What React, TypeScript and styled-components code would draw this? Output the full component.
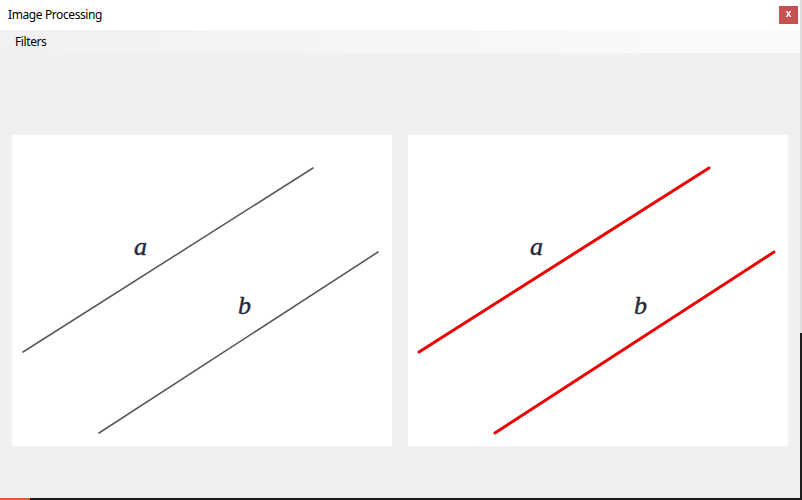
import styled, { createGlobalStyle } from "styled-components";

const GlobalStyle = createGlobalStyle`
  html, body {
    margin: 0;
    padding: 0;
    width: 802px;
    height: 500px;
    overflow: hidden;
  }
  body {
    background: linear-gradient(to bottom, #dedede 0, #dedede 333px, #1e1e1e 333px);
    font-family: "Noto Sans", "Liberation Sans", sans-serif;
  }
`;

type Line = { x1: number; y1: number; x2: number; y2: number };
type Label = { text: string; x: number; y: number };

const lines: Line[] = [
  { x1: 11, y1: 217, x2: 301, y2: 33 },
  { x1: 87, y1: 298, x2: 366, y2: 117 },
];

const labels: Label[] = [
  { text: "a", x: 122, y: 120 },
  { text: "b", x: 226, y: 179 },
];

const Desktop = styled.div`
  width: 802px;
  height: 500px;
  display: flex;
  flex-direction: column;
`;

const Window = styled.div`
  width: 800px;
  height: 498px;
  display: flex;
  flex-direction: column;
  background: #f0f0f0;
`;

const Taskbar = styled.div`
  height: 2px;
  background: linear-gradient(to right, #e2572e 0, #e2572e 30px, #1c1c1c 30px);
`;

const TitleBar = styled.div`
  height: 30px;
  background: #ffffff;
  display: flex;
  align-items: center;
  justify-content: space-between;
  padding: 0 2px 0 8px;
`;

const Title = styled.span`
  font-size: 12px;
  letter-spacing: -0.4px;
  color: #000;
  margin-top: -1px;
`;

const CloseButton = styled.button`
  width: 19px;
  height: 18px;
  border: none;
  padding: 0 0 2px;
  margin-top: -1px;
  background: #c75050;
  color: #fff;
  font-family: "Liberation Sans", sans-serif;
  font-weight: bold;
  font-size: 10px;
  line-height: 1;
`;

const MenuStrip = styled.div`
  height: 23px;
  display: flex;
  align-items: center;
  padding-left: 15px;
  background: linear-gradient(to right, #f1f1f1, #fbfbfb);
`;

const MenuItem = styled.span`
  font-size: 12px;
  letter-spacing: -0.4px;
  color: #000;
  margin-top: -1px;
`;

const Body = styled.div`
  flex: 1;
  display: flex;
  gap: 16px;
  padding: 82px 0 0 12px;
`;

const PictureBox = styled.div`
  width: 380px;
  height: 311px;
  background: #ffffff;
`;

const Glyph = styled.text`
  font-family: "Liberation Serif", "DejaVu Serif", serif;
  font-style: italic;
  font-size: 26px;
  fill: #262838;
  stroke: #262838;
  stroke-width: 0.4px;
`;

function Picture({ stroke, width }: { stroke: string; width: number }) {
  return (
    <PictureBox>
      <svg width="380" height="311" viewBox="0 0 380 311">
        {lines.map((l, i) => (
          <line
            key={i}
            x1={l.x1}
            y1={l.y1}
            x2={l.x2}
            y2={l.y2}
            stroke={stroke}
            strokeWidth={width}
            strokeLinecap="round"
          />
        ))}
        {labels.map((t) => (
          <Glyph key={t.text} x={t.x} y={t.y}>
            {t.text}
          </Glyph>
        ))}
      </svg>
    </PictureBox>
  );
}

export default function App() {
  return (
    <Desktop>
      <GlobalStyle />
      <Window>
        <TitleBar>
          <Title>Image Processing</Title>
          <CloseButton>x</CloseButton>
        </TitleBar>
        <MenuStrip>
          <MenuItem>Filters</MenuItem>
        </MenuStrip>
        <Body>
          <Picture stroke="#5a5a5a" width={1.6} />
          <Picture stroke="#ee0000" width={3} />
        </Body>
      </Window>
      <Taskbar />
    </Desktop>
  );
}
